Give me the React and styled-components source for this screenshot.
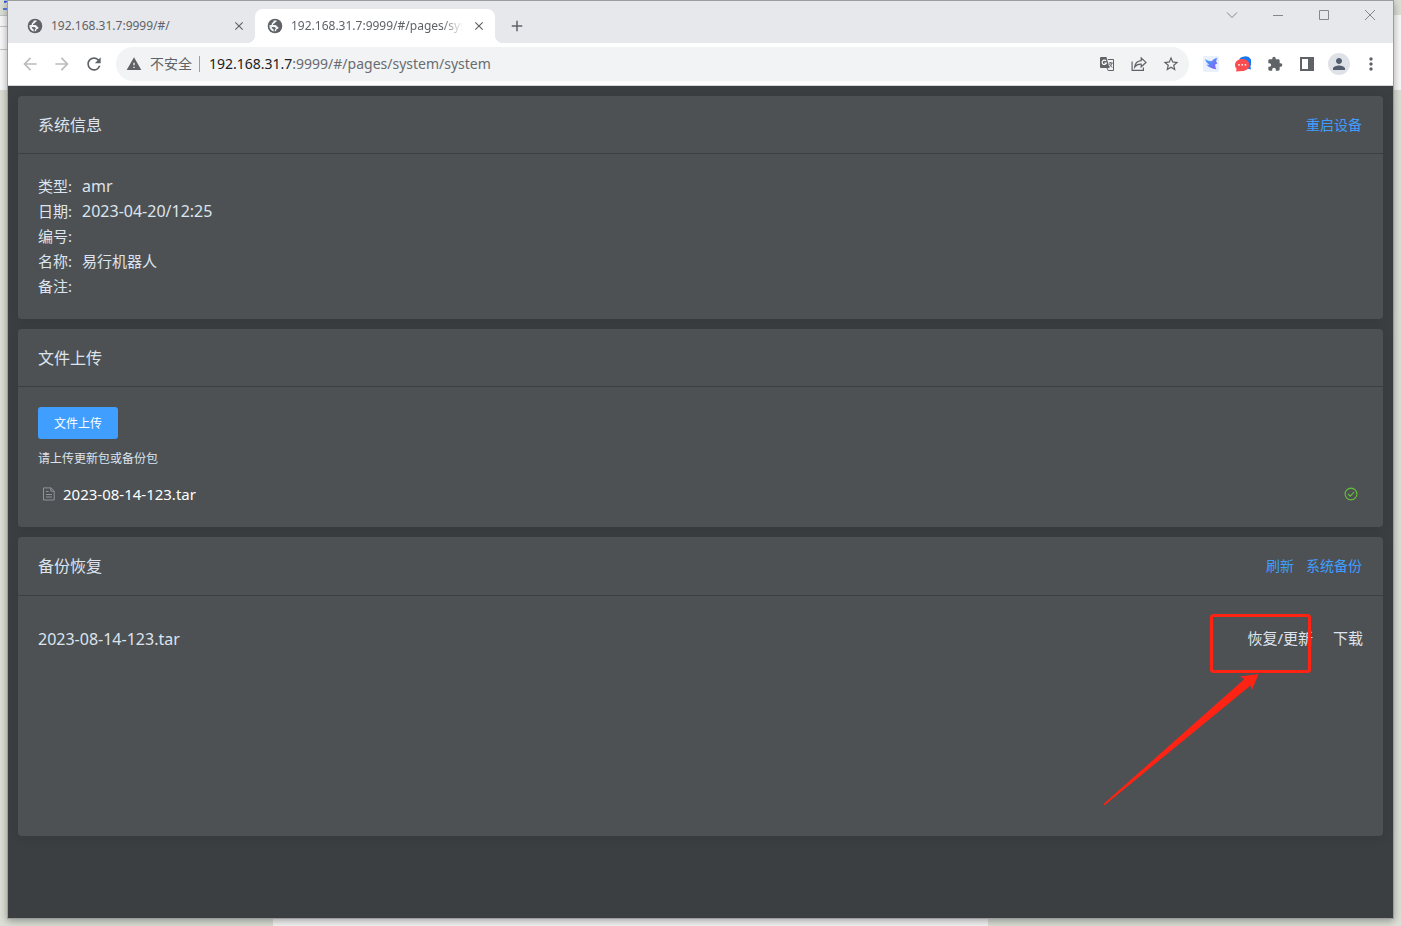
import React from 'react'
import styled, { createGlobalStyle } from 'styled-components'
import {
    MdArrowBack,
    MdArrowForward,
    MdRefresh,
    MdWarning,
    MdStarBorder,
    MdExtension,
    MdPerson,
    MdMoreVert,
    MdClose,
    MdAdd
} from 'react-icons/md'

const info = [
    { label: '类型', value: 'amr' },
    { label: '日期', value: '2023-04-20/12:25' },
    { label: '编号', value: '' },
    { label: '名称', value: '易行机器人', cjk: true },
    { label: '备注', value: '' }
]

function GlobeIcon() {
    return (
        <svg width="16" height="16" viewBox="0 0 16 16">
            <circle cx="8" cy="8" r="7.3" fill="#5f6368" />
            <path
                d="M9.6 2.4 C9.8 3.6 9.2 4.2 8.2 4.3 L7.4 5.4 L6 6 L6.2 7 L9 7.1 L10 8.6 L11.4 9 L11.2 10.8 L9.6 11.2 L9 13 L7.6 13.5 L7.8 11.8 L8.8 10.6 L8 9.2 L5 9 L2.4 8.4 L2.6 7 L4.6 7 L4.8 5.4 L6.6 3.6 L6.8 2.5 Z"
                fill="#f5f5f7"
            />
            <path d="M2.4 8.2 L5 9.2 L5.4 10.8 L6.8 11.6 L6.6 13.4 C4.2 12.8 2.5 10.6 2.4 8.2 Z" fill="#f5f5f7" />
        </svg>
    )
}

function TranslateIcon() {
    return (
        <svg width="16" height="16" viewBox="0 0 16 16">
            <path d="M2 1 H7.5 L10.5 12 H2 Q1 12 1 11 V2 Q1 1 2 1 Z" fill="#5f6368" />
            <path d="M7.1 5 A2.2 2.2 0 1 0 7.4 7 H5.4" fill="none" stroke="#fff" strokeWidth="1.1" />
            <path d="M9 3.5 H14.5 V14.5 H9.2 L8 12" fill="none" stroke="#5f6368" strokeWidth="1" />
            <path d="M9.8 7 H13.6 M11.6 6 V7 M13 7 C12.6 9 11.4 10.4 10.4 11 M10.6 8 C11.2 9.6 12.4 10.8 13.4 11.4" fill="none" stroke="#5f6368" strokeWidth="1" />
        </svg>
    )
}

function ShareIcon() {
    return (
        <svg width="16" height="16" viewBox="0 0 16 16" fill="none" stroke="#5f6368" strokeWidth="1.2">
            <path d="M1.1 5.5 V14.4 H12.4 V11.5" />
            <path d="M10.2 2 L15 6.4 L10.2 10.8 V8.2 C7.2 8 5.2 9 3.6 11.2 C4 7.4 6.4 5 10.2 4.6 Z" />
        </svg>
    )
}

function BirdIcon() {
    return (
        <svg width="16" height="16" viewBox="0 0 16 16">
            <defs>
                <linearGradient id="bird" x1="0" y1="0" x2="1" y2="1">
                    <stop offset="0" stopColor="#3fb0f5" />
                    <stop offset="1" stopColor="#8a55f7" />
                </linearGradient>
            </defs>
            <rect width="16" height="16" rx="2" fill="#eaf1fd" />
            <path d="M2 3 C4.5 4.6 6.8 5.2 8.6 5.3 C10 3.4 12 2.2 14.6 1.8 C13 3.4 13.8 4.4 13.2 6 C14 6.4 14 7 14.4 7.4 L12.4 8.3 C12 10 12.4 11.6 13.4 13.2 C9.4 13 5.4 11.6 3.4 8.6 L6.4 9 C4.4 7.6 2.6 5.6 2 3 Z" fill="url(#bird)" />
        </svg>
    )
}

function ChatIcon() {
    return (
        <svg width="16" height="16" viewBox="0 0 16 16">
            <path d="M9.6 0.4 A6 6 0 0 1 15.4 10 L16 13.4 L12 12.4 L4.2 3 A6 6 0 0 1 9.6 0.4 Z" fill="#1677f0" />
            <path d="M7.2 3 C11.2 3 14.4 5.6 14.4 9 C14.4 12.4 11.2 15 7.2 15 L1 15.4 L1.6 12.8 C0.6 11.8 0 10.4 0 9 C0 5.6 3.2 3 7.2 3 Z" fill="#fb4d50" />
            <circle cx="4" cy="8.8" r="0.9" fill="#fff" />
            <circle cx="7.2" cy="8.8" r="0.9" fill="#fff" />
            <circle cx="10.4" cy="8.8" r="0.9" fill="#fff" />
        </svg>
    )
}

function PanelIcon() {
    return (
        <svg width="16" height="16" viewBox="0 0 16 16">
            <path d="M1 1 H15 V15 H1 Z M3 3 V13 H9 V3 Z" fill="#5f6368" fillRule="evenodd" />
        </svg>
    )
}

function DocumentIcon() {
    return (
        <svg width="14" height="14" viewBox="0 0 14 14" fill="none" stroke="#909399" strokeWidth="1">
            <path d="M1.5 0.9 H9 L12.2 4 V13 H1.5 Z M8.8 1 V4.2 H12" />
            <path d="M4 4.5 H6.5 M4 7.5 H10 M4 10 H10" />
        </svg>
    )
}

function CheckIcon() {
    return (
        <svg width="14" height="14" viewBox="0 0 14 14" fill="none" stroke="#67c23a" strokeWidth="1.1">
            <circle cx="7" cy="7" r="5.9" />
            <path d="M4 7 L6.3 9.2 L10.1 5" />
        </svg>
    )
}

function CaptionIcon({ d }) {
    return (
        <svg width="12" height="12" viewBox="0 0 12 12" fill="none" stroke="#85878b" strokeWidth="1">
            <path d={d} />
        </svg>
    )
}

function Tab({ title, active }) {
    return (
        <TabBox $active={active}>
            <GlobeIcon />
            <TabTitle $fade={active}>{title}</TabTitle>
            <IconButton $size="16px" aria-label="关闭标签页"><MdClose size={14} /></IconButton>
        </TabBox>
    )
}

function Card({ title, links = [], children }) {
    return (
        <CardBox>
            <CardHeader $tall={links.length > 1}>
                <CardTitle>{title}</CardTitle>
                <Links>
                    {links.map(link => <TextLink key={link} href="#">{link}</TextLink>)}
                </Links>
            </CardHeader>
            <CardBody>{children}</CardBody>
        </CardBox>
    )
}

function App() {
    return (
        <Desktop>
            <GlobalStyle />
            <DesktopMark width="7" height="12" viewBox="0 0 7 12">
                <path d="M4 1.5 H7 M3 9 H7 M5 1 V3" fill="none" stroke="#2b50d8" strokeWidth="1.5" />
            </DesktopMark>
            <BrowserWindow>
                <TabStrip>
                    <Tab title="192.168.31.7:9999/#/" />
                    <Tab title="192.168.31.7:9999/#/pages/sys" active />
                    <NewTab aria-label="新标签页"><MdAdd size={18} /></NewTab>
                    <Captions>
                        <CaptionButton aria-label="搜索标签页"><CaptionIcon d="M1 3.5 L6 8.5 L11 3.5" /></CaptionButton>
                        <CaptionButton aria-label="最小化"><CaptionIcon d="M1 6.5 H11" /></CaptionButton>
                        <CaptionButton aria-label="最大化"><CaptionIcon d="M1.5 1.5 H10.5 V10.5 H1.5 Z" /></CaptionButton>
                        <CaptionButton aria-label="关闭"><CaptionIcon d="M1 1 L11 11 M11 1 L1 11" /></CaptionButton>
                    </Captions>
                </TabStrip>
                <Toolbar>
                    <IconButton $dim aria-label="后退"><MdArrowBack size={20} /></IconButton>
                    <IconButton $dim aria-label="前进"><MdArrowForward size={20} /></IconButton>
                    <IconButton aria-label="重新加载"><MdRefresh size={20} /></IconButton>
                    <Omnibox>
                        <MdWarning size={16} />
                        <Security>不安全</Security>
                        <Address><b>192.168.31.7</b>:9999/#/pages/system/system</Address>
                        <IconButton aria-label="翻译"><TranslateIcon /></IconButton>
                        <IconButton aria-label="分享"><ShareIcon /></IconButton>
                        <IconButton aria-label="收藏"><MdStarBorder size={18} /></IconButton>
                    </Omnibox>
                    <IconButton aria-label="翻译助手"><BirdIcon /></IconButton>
                    <IconButton aria-label="消息"><ChatIcon /></IconButton>
                    <IconButton aria-label="扩展程序"><MdExtension size={16} /></IconButton>
                    <IconButton aria-label="侧边栏"><PanelIcon /></IconButton>
                    <IconButton aria-label="用户"><Avatar><MdPerson size={18} /></Avatar></IconButton>
                    <IconButton aria-label="菜单"><MdMoreVert size={20} /></IconButton>
                </Toolbar>
                <Page>
                    <Card title="系统信息" links={['重启设备']}>
                        {info.map(row => (
                            <InfoRow key={row.label}>
                                <span>{row.label}:</span>
                                <InfoValue $cjk={row.cjk}>{row.value}</InfoValue>
                            </InfoRow>
                        ))}
                    </Card>
                    <Card title="文件上传">
                        <UploadButton>文件上传</UploadButton>
                        <Tip>请上传更新包或备份包</Tip>
                        <UploadedFile>
                            <DocumentIcon />
                            <UploadedName>2023-08-14-123.tar</UploadedName>
                            <CheckIcon />
                        </UploadedFile>
                    </Card>
                    <Card title="备份恢复" links={['刷新', '系统备份']}>
                        <BackupList>
                            <BackupRow>
                                <BackupName>2023-08-14-123.tar</BackupName>
                                <ActionButton>恢复/更新</ActionButton>
                                <ActionButton>下载</ActionButton>
                            </BackupRow>
                        </BackupList>
                        <Annotation width="220" height="200" viewBox="0 0 220 200">
                            <rect x="111.5" y="5.5" width="98" height="56" rx="2" fill="none" stroke="#ff2314" strokeWidth="3" />
                            <path d="M158.5 64 L140 66.5 L144.5 69 L3.5 194 L4.5 195.3 L150.5 75.5 L152 80 Z" fill="#ff2314" />
                        </Annotation>
                    </Card>
                </Page>
            </BrowserWindow>
        </Desktop>
    )
}
export default App;

const GlobalStyle = createGlobalStyle`
    *{
        box-sizing:border-box;
    }
    body{
        margin:0;
        font-family:"Noto Sans","Noto Sans CJK SC",sans-serif;
    }
    button{
        font-family:inherit;
        border:none;
        background:none;
        padding:0;
        cursor:pointer;
    }
    svg{
        display:block;
        flex-shrink:0;
    }
`

const Desktop = styled.div`
    position:relative;
    min-height:100vh;
    display:flex;
    padding:0 7px 7px;
    background-color:#dde0d6;
    background-image:
        linear-gradient(#f7f7f7,#f7f7f7),
        linear-gradient(#c4c5c6 1px,#f9f9f9 1px,#f9f9f9 11px,#c4c5c6 11px,#c4c5c6 12px,#f9f9f9 12px,#f9f9f9 34px,#c4c5c6 34px,#c4c5c6 35px,#f9f9f9 35px),
        linear-gradient(#f9f9f9,#f9f9f9);
    background-size:715px 8px,50% 75px,50% 75px;
    background-position:calc(50% - 70px) 100%,0 15px,100% 15px;
    background-repeat:no-repeat;
`

const DesktopMark = styled.svg`
    position:absolute;
    top:0;
    left:0;
`

const BrowserWindow = styled.div`
    flex:1;
    min-width:0;
    display:flex;
    flex-direction:column;
    border:1px solid #9b9da0;
    box-shadow:0 2px 8px rgba(0,0,0,0.35);
    background-color:#3b3f42;
`

const TabStrip = styled.div`
    height:42px;
    display:flex;
    align-items:flex-end;
    padding-left:7px;
    background-color:#e7e8ec;
`

const TabBox = styled.div`
    position:relative;
    width:240px;
    height:34px;
    display:flex;
    align-items:center;
    gap:8px;
    padding:0 8px 0 12px;
    border-radius:8px 8px 0 0;
    color:#5f6368;
    background-color:${props => props.$active ? '#fff' : 'transparent'};
    &::before,&::after{
        content:'';
        display:${props => props.$active ? 'block' : 'none'};
        position:absolute;
        bottom:0;
        width:8px;
        height:8px;
    }
    &::before{
        left:-8px;
        background:radial-gradient(circle at 0 0,transparent 8px,#fff 8px);
    }
    &::after{
        right:-8px;
        background:radial-gradient(circle at 100% 0,transparent 8px,#fff 8px);
    }
`

const TabTitle = styled.span`
    flex:1;
    overflow:hidden;
    white-space:nowrap;
    font-size:12px;
    line-height:18px;
    mask-image:${props => props.$fade ? 'linear-gradient(90deg,#000 88%,transparent)' : 'none'};
`

const IconButton = styled.button`
    width:${props => props.$size || '32px'};
    height:${props => props.$size || '32px'};
    flex-shrink:0;
    display:flex;
    justify-content:center;
    align-items:center;
    color:${props => props.$dim ? '#babcbe' : '#5f6368'};
`

const NewTab = styled(IconButton)`
    height:34px;
    margin-left:6px;
`

const Captions = styled.div`
    margin-left:auto;
    align-self:flex-start;
    display:flex;
`

const CaptionButton = styled.button`
    width:46px;
    height:28px;
    display:flex;
    justify-content:center;
    align-items:center;
`

const Toolbar = styled.div`
    height:43px;
    display:flex;
    align-items:center;
    padding:0 6px;
    border-bottom:1px solid #d5d7da;
    background-color:#fff;
`

const Omnibox = styled.div`
    flex:1;
    min-width:0;
    height:34px;
    display:flex;
    align-items:center;
    margin:0 6px;
    padding:0 2px 0 10px;
    border-radius:17px;
    color:#5f6368;
    background-color:#f1f3f4;
`

const Security = styled.span`
    padding:0 7px 0 8px;
    border-right:1px solid #9aa0a6;
    font-size:14px;
    line-height:16px;
`

const Address = styled.span`
    flex:1;
    min-width:0;
    overflow:hidden;
    white-space:nowrap;
    padding-left:9px;
    font-size:14px;
    line-height:20px;
    color:#696c70;
    b{
        font-weight:400;
        color:#202124;
    }
`

const Avatar = styled.span`
    width:22px;
    height:22px;
    display:flex;
    justify-content:center;
    align-items:center;
    border-radius:50%;
    color:#535d70;
    background-color:#dee1e6;
`

const Page = styled.main`
    flex:1;
    display:flex;
    flex-direction:column;
    gap:10px;
    padding:10px;
    color:#dde4ef;
`

const CardBox = styled.section`
    position:relative;
    border-radius:4px;
    background-color:#4d5153;
    box-shadow:0 2px 12px rgba(0,0,0,0.1);
`

const CardHeader = styled.div`
    height:${props => props.$tall ? '59px' : '58px'};
    display:flex;
    align-items:center;
    justify-content:space-between;
    padding:0 21px 0 20px;
    border-bottom:1px solid #3b3f42;
`

const CardTitle = styled.h2`
    margin:0;
    font-size:16px;
    font-weight:400;
    line-height:24px;
`

const Links = styled.div`
    display:flex;
    gap:12px;
`

const TextLink = styled.a`
    font-size:14px;
    line-height:20px;
    color:#409eff;
    text-decoration:none;
`

const CardBody = styled.div`
    padding:20px;
`

const InfoRow = styled.div`
    display:flex;
    align-items:center;
    gap:10px;
    height:25px;
    font-size:15px;
    line-height:25px;
`

const InfoValue = styled.span`
    font-size:${props => props.$cjk ? '15px' : '16px'};
`

const UploadButton = styled.button`
    display:block;
    height:32px;
    padding:0 16px;
    border-radius:3px;
    font-size:12px;
    color:#fff;
    background-color:#409eff;
`

const Tip = styled.div`
    margin-top:10px;
    font-size:12px;
    line-height:20px;
`

const UploadedFile = styled.div`
    display:flex;
    align-items:center;
    gap:7px;
    height:26px;
    margin-top:12px;
    padding:0 5px 0 4px;
`

const UploadedName = styled.span`
    flex:1;
    font-size:15px;
    line-height:24px;
    color:#fff;
`

const BackupList = styled.div`
    min-height:200px;
`

const BackupRow = styled.div`
    display:flex;
    align-items:center;
    gap:20px;
    height:45px;
`

const BackupName = styled.span`
    flex:1;
    font-size:16px;
`

const ActionButton = styled.button`
    font-size:15px;
    line-height:25px;
    color:#dde4ef;
`

const Annotation = styled.svg`
    position:absolute;
    top:73px;
    right:63px;
    pointer-events:none;
`
